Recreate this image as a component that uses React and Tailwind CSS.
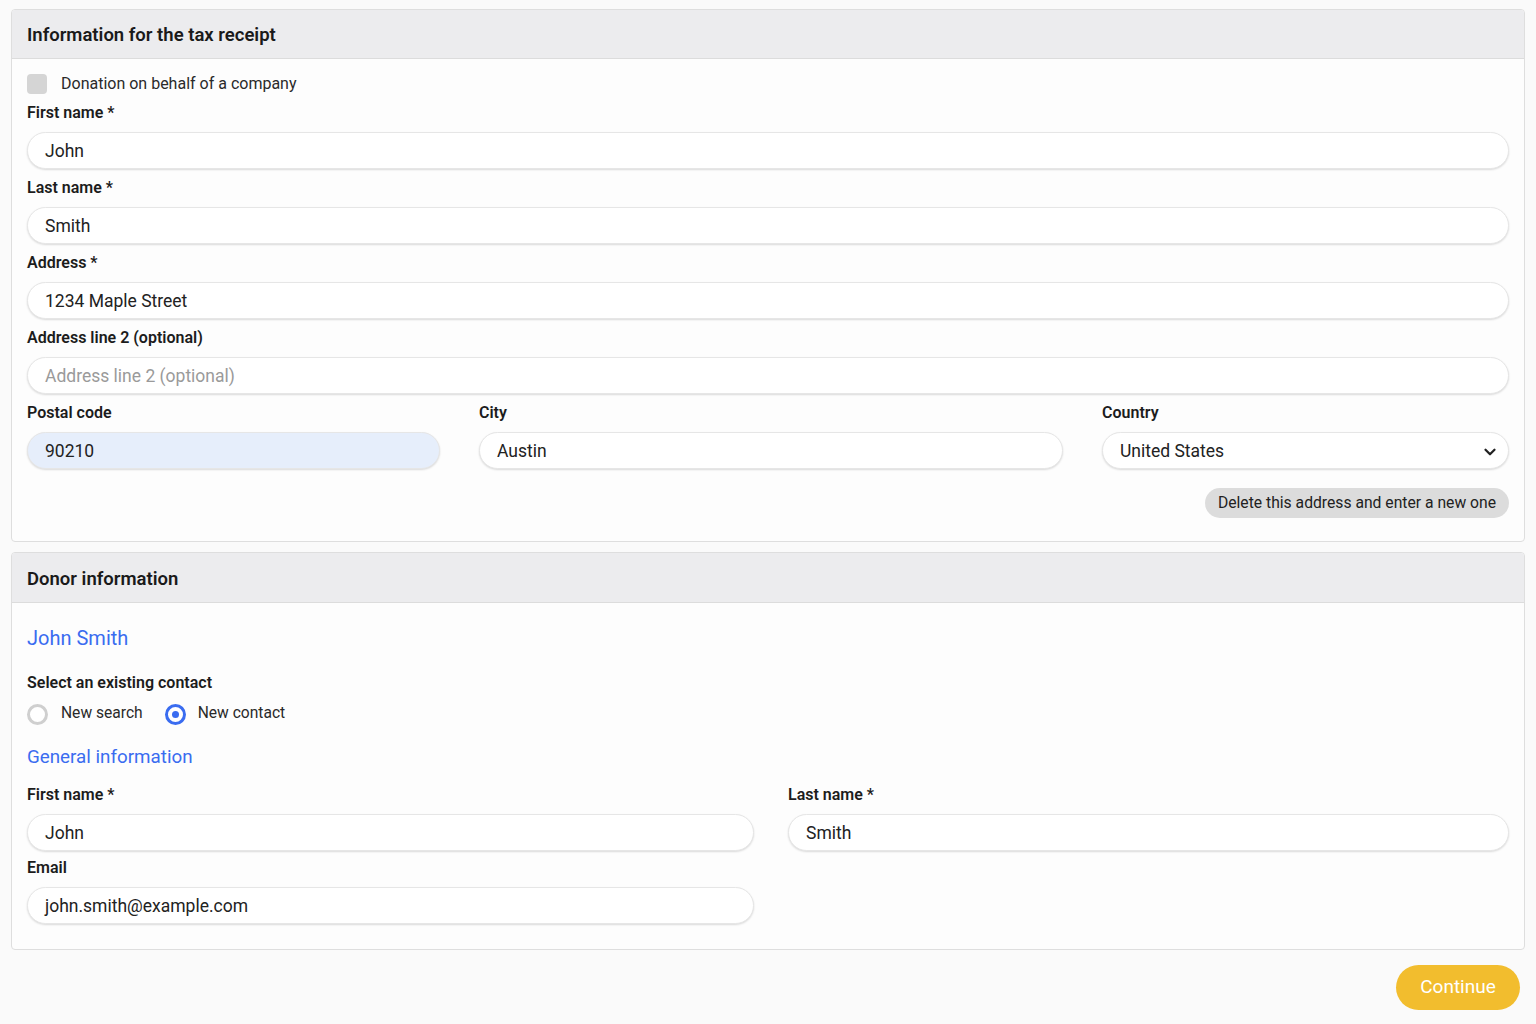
import { ChevronDown } from 'lucide-react';

function Label({ children }) {
    return <div className="text-[16px] font-semibold leading-5 text-[#1c1c1c]">{children}</div>;
}

function TextInput({ value, placeholder, filled }) {
    return (
        <div
            className={`h-[37px] rounded-full border border-[#e6e6e6] px-[17px] pt-[2px] flex items-center text-[17.5px] shadow-[0_1px_2px_rgba(0,0,0,0.14)] ${filled ? 'bg-[#e6eefb]' : 'bg-white'}`}
        >
            {value ? (
                <span className="text-[#222]">{value}</span>
            ) : (
                <span className="text-[#9a9a9a]">{placeholder}</span>
            )}
        </div>
    );
}

function Field({ label, value, placeholder, filled }) {
    return (
        <div className="flex flex-col gap-[9px]">
            <Label>{label}</Label>
            <TextInput value={value} placeholder={placeholder} filled={filled} />
        </div>
    );
}

function Panel({ title, headerHeight, children }) {
    return (
        <section className="rounded-[4px] border border-[#dedede] bg-[#fdfdfd] overflow-hidden">
            <header className={`${headerHeight} flex items-center px-[15px] pt-[4px] bg-[#ececee] border-b border-[#dcdcdc]`}>
                <h2 className="text-[18.5px] font-semibold text-[#1a1a1a]">{title}</h2>
            </header>
            {children}
        </section>
    );
}

export default function App() {
    return (
        <div className="min-h-screen bg-[#fafafa] px-[11px] pt-[9px]" style={{ fontFamily: 'Roboto, "Noto Sans", sans-serif' }}>
            {/* Tax receipt block */}
            <Panel title="Information for the tax receipt" headerHeight="h-[49px]">
                <div className="px-[15px] pt-[15px] pb-[23px] flex flex-col">
                    <label className="flex items-center gap-[14px] h-[20px]">
                        <span className="w-[20px] h-[20px] rounded-[4px] bg-[#d5d5d5]" />
                        <span className="text-[16px] text-[#2a2a2a]">Donation on behalf of a company</span>
                    </label>
                    <div className="flex flex-col gap-[9px] mt-[9px]">
                        <Field label="First name *" value="John" />
                        <Field label="Last name *" value="Smith" />
                        <Field label="Address *" value="1234 Maple Street" />
                        <Field label="Address line 2 (optional)" placeholder="Address line 2 (optional)" />
                    </div>
                    <div className="grid grid-cols-[413px_1fr_407px] gap-[39px] mt-[9px]">
                        <Field label="Postal code" value="90210" filled />
                        <Field label="City" value="Austin" />
                        <div className="flex flex-col gap-[9px]">
                            <Label>Country</Label>
                            <div className="h-[37px] rounded-full border border-[#e6e6e6] bg-white pl-[17px] pr-[9px] pt-[2px] flex items-center justify-between text-[17.5px] text-[#222] shadow-[0_1px_2px_rgba(0,0,0,0.14)]">
                                <span>United States</span>
                                <ChevronDown size={18} strokeWidth={3} className="text-[#222]" />
                            </div>
                        </div>
                    </div>
                    <div className="flex justify-end mt-[19px]">
                        <button className="h-[30px] px-[13px] rounded-full bg-[#dcdcdc] text-[15.7px] text-[#222]">
                            Delete this address and enter a new one
                        </button>
                    </div>
                </div>
            </Panel>

            {/* Donor block */}
            <div className="mt-[10px]">
                <Panel title="Donor information" headerHeight="h-[50px]">
                    <div className="px-[15px] pt-[23px] pb-[25px] flex flex-col">
                        <div className="text-[20px] text-[#3a6cf0] leading-6">John Smith</div>
                        <div className="mt-[23px]">
                            <Label>Select an existing contact</Label>
                        </div>
                        <div className="flex items-center mt-[10px] h-[22px]">
                            <span className="w-[21px] h-[21px] rounded-full border-[3px] border-[#cfcfcf] bg-white" />
                            <span className="ml-[13px] text-[15.6px] text-[#2a2a2a]">New search</span>
                            <span className="ml-[22px] w-[21px] h-[21px] rounded-full border-[3px] border-[#3a6cf0] bg-white flex items-center justify-center">
                                <span className="w-[7px] h-[7px] rounded-full bg-[#3a6cf0]" />
                            </span>
                            <span className="ml-[12px] text-[15.6px] text-[#2a2a2a]">New contact</span>
                        </div>
                        <div className="text-[18.8px] text-[#3a6cf0] leading-6 mt-[20px]">General information</div>
                        <div className="grid grid-cols-[727px_1fr] gap-x-[34px] gap-y-[7px] mt-[16px]">
                            <Field label="First name *" value="John" />
                            <Field label="Last name *" value="Smith" />
                            <Field label="Email" value="john.smith@example.com" />
                        </div>
                    </div>
                </Panel>
            </div>

            <div className="flex justify-end pr-[5px] mt-[15px]">
                <button className="h-[45px] w-[124px] rounded-full bg-[#f2bd2e] text-white text-[19px]">Continue</button>
            </div>
        </div>
    );
}
